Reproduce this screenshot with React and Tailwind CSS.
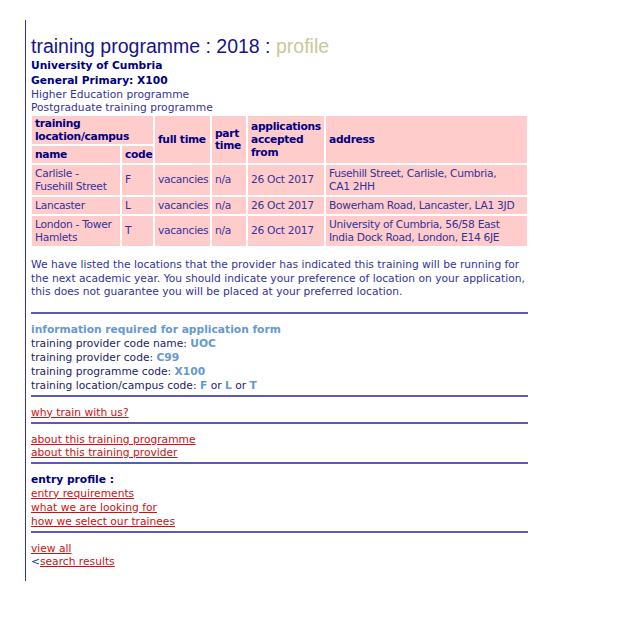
const verdana = { fontFamily: '"DejaVu Sans", Verdana, sans-serif' };

function Rule() {
  return <div className="mt-[2px] mb-[9px] h-[2px] bg-[#5a5ab8]" />;
}

function Link({ children }) {
  return <a href="#" className="text-[#cc1111] underline underline-offset-[1px]">{children}</a>;
}

const rows = [
  { name: 'Carlisle - Fusehill Street', code: 'F', address: ['Fusehill Street, Carlisle, Cumbria,', 'CA1 2HH'] },
  { name: 'Lancaster', code: 'L', address: ['Bowerham Road, Lancaster, LA1 3JD'] },
  { name: 'London - Tower Hamlets', code: 'T', address: ['University of Cumbria, 56/58 East', 'India Dock Road, London, E14 6JE'] },
];

export default function App() {
  return (
    <div className="min-h-[642px] bg-white pt-[20px]">
      <div className="ml-[25px] w-[503px] border-l border-[#3333aa] pb-[12px] pl-[5px] text-[10.7px] leading-[13.5px] text-[#333399]" style={verdana}>
        {/* Header */}
        <h1 className="pt-[14px] text-[19.5px] leading-[24px] text-[#14148a]" style={{ fontFamily: '"Liberation Sans", Arial, sans-serif' }}>
          training programme : 2018 : <span className="text-[#c8c89a]">profile</span>
        </h1>
        <p className="mt-[1px] font-bold leading-[14px] text-[#000080]">University of Cumbria</p>
        <p className="font-bold leading-[15px] text-[#000080]">General Primary: X100</p>
        <p className="leading-[13px]">Higher Education programme</p>
        <p className="leading-[13px]">Postgraduate training programme</p>

        {/* Locations table */}
        <table className="-ml-[1px] w-[499px] table-fixed border-separate border-spacing-[2px] tracking-[-0.3px]">
          <colgroup>
            <col className="w-[88px]" />
            <col className="w-[31px]" />
            <col className="w-[55px]" />
            <col className="w-[34px]" />
            <col className="w-[76px]" />
            <col />
          </colgroup>
          <thead className="font-bold text-[#000080]">
            <tr>
              <th colSpan={2} className="bg-[#ffcccc] px-[3px] py-[1px] text-left align-middle leading-[13px]">training location/campus</th>
              <th rowSpan={2} className="whitespace-nowrap bg-[#ffcccc] px-[3px] text-left align-middle">full time</th>
              <th rowSpan={2} className="bg-[#ffcccc] px-[3px] text-left align-middle leading-[12px]">part time</th>
              <th rowSpan={2} className="bg-[#ffcccc] px-[3px] text-left align-middle leading-[13px]">applications accepted from</th>
              <th rowSpan={2} className="bg-[#ffcccc] px-[3px] text-left align-middle">address</th>
            </tr>
            <tr>
              <th className="bg-[#ffcccc] px-[3px] py-[2px] text-left leading-[13px]">name</th>
              <th className="bg-[#ffcccc] px-[3px] py-[2px] text-left leading-[13px]">code</th>
            </tr>
          </thead>
          <tbody>
            {rows.map((r) => (
              <tr key={r.code}>
                <td className="bg-[#ffcccc] px-[3px] py-[2px] leading-[13px]">{r.name}</td>
                <td className="bg-[#ffcccc] px-[3px]">{r.code}</td>
                <td className="bg-[#ffcccc] px-[3px]">vacancies</td>
                <td className="bg-[#ffcccc] px-[3px]">n/a</td>
                <td className="whitespace-nowrap bg-[#ffcccc] px-[3px]">26 Oct 2017</td>
                <td className="bg-[#ffcccc] px-[3px] py-[2px] leading-[13px]">
                  {r.address.map((line) => (
                    <span key={line} className="block">{line}</span>
                  ))}
                </td>
              </tr>
            ))}
          </tbody>
        </table>

        <p className="mt-[10px] mb-[13px]">
          We have listed the locations that the provider has indicated this training will be running for the next academic year. You should indicate your preference of location on your application, this does not guarantee you will be placed at your preferred location.
        </p>

        <Rule />

        {/* Application info */}
        <div className="leading-[14px] text-[#222266]">
          <p className="font-bold text-[#6699cc]">information required for application form</p>
          <p>training provider code name: <b className="text-[#6699cc]">UOC</b></p>
          <p>training provider code: <b className="text-[#6699cc]">C99</b></p>
          <p>training programme code: <b className="text-[#6699cc]">X100</b></p>
          <p>training location/campus code: <b className="text-[#6699cc]">F</b> or <b className="text-[#6699cc]">L</b> or <b className="text-[#6699cc]">T</b></p>
        </div>

        <Rule />
        <p className="leading-[14px]"><Link>why train with us?</Link></p>
        <Rule />
        <div className="leading-[13.5px]">
          <p><Link>about this training programme</Link></p>
          <p><Link>about this training provider</Link></p>
        </div>
        <Rule />
        <div className="leading-[14px]">
          <p className="font-bold text-[#000080]">entry profile :</p>
          <p><Link>entry requirements</Link></p>
          <p><Link>what we are looking for</Link></p>
          <p><Link>how we select our trainees</Link></p>
        </div>
        <Rule />
        <div className="leading-[13.5px]">
          <p><Link>view all</Link></p>
          <p>&lt;<Link>search results</Link></p>
        </div>
      </div>
    </div>
  );
}
